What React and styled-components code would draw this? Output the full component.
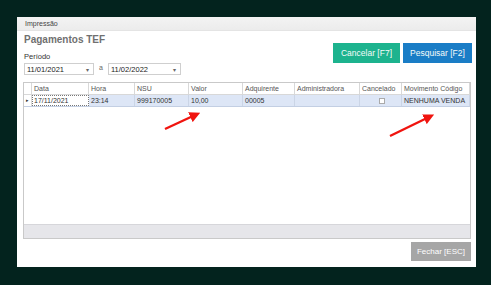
import styled, { createGlobalStyle } from "styled-components";

const GlobalStyle = createGlobalStyle`
  html, body {
    margin: 0;
    padding: 0;
    background: #03231e;
    font-family: "Liberation Sans", Arial, sans-serif;
  }
`;

const columns = [
  { key: "ind", title: "", width: 8 },
  { key: "data", title: "Data", width: 57 },
  { key: "hora", title: "Hora", width: 46 },
  { key: "nsu", title: "NSU", width: 54 },
  { key: "valor", title: "Valor", width: 54 },
  { key: "adq", title: "Adquirente", width: 52 },
  { key: "adm", title: "Administradora", width: 65 },
  { key: "canc", title: "Cancelado", width: 42 },
  { key: "mov", title: "Movimento Código", width: 68 },
];

const rows = [
  {
    data: "17/11/2021",
    hora: "23:14",
    nsu: "999170005",
    valor: "10,00",
    adq: "00005",
    adm: "",
    canc: false,
    mov: "NENHUMA VENDA",
  },
];

const gridTemplate = columns.map((c) => `${c.width}px`).join(" ");

function App() {
  return (
    <>
      <GlobalStyle />
      <Page>
        <Window>
          <TitleBar>Impressão</TitleBar>
          <Body>
            <Header>
              <Filters>
                <Title>Pagamentos TEF</Title>
                <Label>Período</Label>
                <DateRow>
                  <DateBox $w={70}>
                    <span>11/01/2021</span>
                    <Caret>▾</Caret>
                  </DateBox>
                  <Sep>a</Sep>
                  <DateBox $w={73}>
                    <span>11/02/2022</span>
                    <Caret>▾</Caret>
                  </DateBox>
                </DateRow>
              </Filters>
              <Actions>
                <ActionButton $bg="#1db38e" $w={67}>Cancelar [F7]</ActionButton>
                <ActionButton $bg="#1a7dc6" $w={69}>Pesquisar [F2]</ActionButton>
              </Actions>
            </Header>

            <Grid>
              <GridRow $head>
                {columns.map((c) => (
                  <HeadCell key={c.key}>{c.title}</HeadCell>
                ))}
              </GridRow>
              {rows.map((r) => (
                <GridRow key={r.nsu} $selected>
                  <Indicator>▸</Indicator>
                  <Cell $focus>{r.data}</Cell>
                  <Cell>{r.hora}</Cell>
                  <Cell>{r.nsu}</Cell>
                  <Cell>{r.valor}</Cell>
                  <Cell>{r.adq}</Cell>
                  <Cell>{r.adm}</Cell>
                  <Cell $center>
                    <Check />
                  </Cell>
                  <Cell>{r.mov}</Cell>
                </GridRow>
              ))}
              <GridSpace />
              <GridFooter />
            </Grid>

            <Footer>
              <CloseButton>Fechar [ESC]</CloseButton>
            </Footer>
          </Body>
        </Window>

        <Arrows width="491" height="285" viewBox="0 0 491 285">
          <defs>
            <marker id="head" markerWidth="4.5" markerHeight="4.5" refX="1.2" refY="2.25" orient="auto">
              <path d="M0,0 L4.5,2.25 L0,4.5 Z" fill="#f0140f" />
            </marker>
          </defs>
          <line x1="165" y1="129" x2="193" y2="116" stroke="#f0140f" strokeWidth="2.4" markerEnd="url(#head)" />
          <line x1="390" y1="136" x2="427" y2="118" stroke="#f0140f" strokeWidth="2.4" markerEnd="url(#head)" />
        </Arrows>
      </Page>
    </>
  );
}

export default App;

const Page = styled.div`
  position: relative;
  width: 491px;
  height: 285px;
  padding: 17px 15px 18px 17px;
  box-sizing: border-box;
`;

const Window = styled.div`
  width: 459px;
  height: 250px;
  background: #ffffff;
  display: flex;
  flex-direction: column;
`;

const TitleBar = styled.div`
  height: 13px;
  line-height: 13px;
  padding-left: 8px;
  font-size: 7px;
  color: #444;
  background: linear-gradient(#f3f3f3, #ececec);
  border-bottom: 1px solid #e4e4e4;
`;

const Body = styled.div`
  flex: 1;
  display: flex;
  flex-direction: column;
  padding: 0 5px 0 6px;
`;

const Header = styled.div`
  height: 51px;
  display: flex;
  justify-content: space-between;
`;

const Filters = styled.div`
  display: flex;
  flex-direction: column;
  padding-left: 1px;
`;

const Title = styled.div`
  margin-top: 3px;
  font-size: 10px;
  font-weight: bold;
  color: #707070;
`;

const Label = styled.div`
  margin-top: 7px;
  font-size: 7.5px;
  color: #333;
`;

const DateRow = styled.div`
  margin-top: 2px;
  display: flex;
  align-items: center;
`;

const DateBox = styled.div`
  width: ${(p) => p.$w}px;
  height: 12px;
  box-sizing: border-box;
  border: 1px solid #cfcfcf;
  display: flex;
  align-items: center;
  justify-content: space-between;
  padding: 0 4px 0 2px;
  font-size: 7.5px;
  color: #222;
`;

const Caret = styled.span`
  font-size: 6px;
  color: #666;
`;

const Sep = styled.span`
  width: 14px;
  text-align: center;
  font-size: 7px;
  color: #666;
  margin-top: -3px;
`;

const Actions = styled.div`
  display: flex;
  gap: 3px;
  margin-top: 12px;
  margin-right: -1px;
`;

const ActionButton = styled.div`
  width: ${(p) => p.$w}px;
  height: 20px;
  display: flex;
  align-items: center;
  justify-content: center;
  background: ${(p) => p.$bg};
  color: #f4fbf9;
  font-size: 8.5px;
`;

const Grid = styled.div`
  height: 157px;
  box-sizing: border-box;
  border: 1px solid #c9c9c9;
  display: flex;
  flex-direction: column;
`;

const GridRow = styled.div`
  display: grid;
  grid-template-columns: ${gridTemplate};
  height: 11px;
  background: ${(p) => (p.$selected ? "#dde6f6" : "#ffffff")};
  border-bottom: 1px solid ${(p) => (p.$selected ? "#c3cfe3" : "#d8d8d8")};
`;

const HeadCell = styled.div`
  font-size: 7px;
  line-height: 11px;
  color: #555;
  padding-left: 2px;
  border-right: 1px solid #d8d8d8;
  white-space: nowrap;
  overflow: hidden;
`;

const Indicator = styled.div`
  font-size: 5px;
  line-height: 11px;
  color: #333;
  text-align: center;
  background: #ffffff;
  border-right: 1px solid #d8d8d8;
`;

const Cell = styled.div`
  font-size: 7px;
  line-height: 11px;
  color: #333;
  padding-left: 2px;
  white-space: nowrap;
  overflow: hidden;
  box-sizing: border-box;
  display: ${(p) => (p.$center ? "flex" : "block")};
  align-items: center;
  justify-content: center;
  border-right: 1px solid ${(p) => (p.$focus ? "transparent" : "#cbd5e6")};
  ${(p) => p.$focus && "outline: 1px dotted #777; outline-offset: -1px; background: #ffffff;"}
`;

const Check = styled.span`
  width: 4px;
  height: 4px;
  border: 1px solid #aaa;
  background: #fff;
`;

const GridSpace = styled.div`
  flex: 1;
`;

const GridFooter = styled.div`
  height: 13px;
  background: #e6e6ea;
  border-top: 1px solid #d6d6da;
`;

const Footer = styled.div`
  display: flex;
  justify-content: flex-end;
  padding-top: 3px;
`;

const CloseButton = styled.div`
  width: 60px;
  height: 19px;
  display: flex;
  align-items: center;
  justify-content: center;
  background: #a6a6a6;
  color: #ffffff;
  font-size: 8px;
`;

const Arrows = styled.svg`
  position: absolute;
  left: 0;
  top: 0;
  pointer-events: none;
`;
